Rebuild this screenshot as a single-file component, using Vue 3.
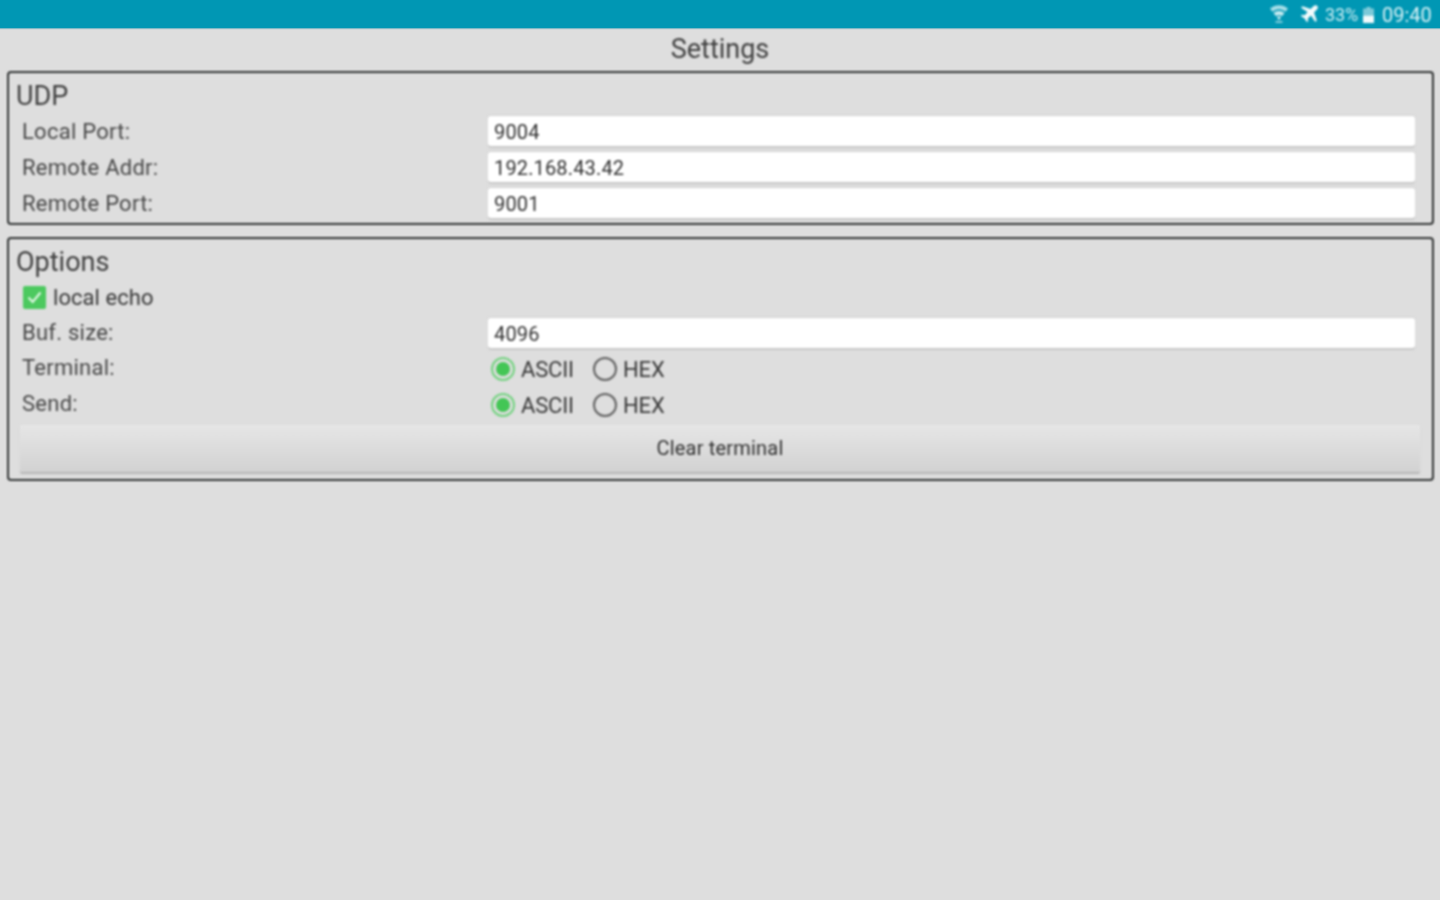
<script setup>
const udp = [
  { label: 'Local Port:', value: '9004' },
  { label: 'Remote Addr:', value: '192.168.43.42' },
  { label: 'Remote Port:', value: '9001' },
]
const modes = ['Terminal:', 'Send:']
</script>

<template>
  <div class="screen">
    <header class="status">
      <svg class="wifi" width="20" height="20" viewBox="0 0 20 20"><path d="M1 4.500C6 0 14 0 19 4.500L16.600 7.800C12.600 4.400 7.400 4.400 3.400 7.800Z" fill="#a8dfe8"/><path d="M4.500 9C8 6.400 12 6.400 15.500 9L13 12.200C11 10.800 9 10.800 7 12.200Z" fill="#c4e9ef"/><path d="M8 13.200C9.300 12.400 10.700 12.400 12 13.200L10 16Z" fill="#e6f7fa"/><rect x="6.500" y="17" width="7" height="1.800" fill="#8fd3df"/></svg>
      <svg class="plane" width="20" height="20" viewBox="0 0 20 20"><path d="M18.200 1.800C17.200.8 15.600 1 14.600 2L11.600 5 3.500 2.200 2 3.700 8.600 8 5.600 11.200 3 10.800 1.800 12 5.600 14.400 8 18.200 9.200 17 8.800 14.400 12 11.400 16.300 18 17.800 16.500 15 8.400 18 5.400C19 4.400 19.200 2.800 18.200 1.800Z" fill="#f4fbfc"/></svg>
      <span class="pct">33%</span>
      <svg class="batt" width="11" height="16" viewBox="0 0 11 16"><rect x="3.500" y="0" width="4" height="2" fill="#8fd3df"/><rect x="0" y="1.500" width="11" height="7" fill="#7cc9d8"/><rect x="0" y="8.500" width="11" height="7.500" fill="#f2fafb"/></svg>
      <span class="time">09:40</span>
    </header>

    <h1 class="title">Settings</h1>

    <section class="panel">
      <h2 class="heading heading-udp">UDP</h2>
      <div v-for="row in udp" :key="row.label" class="row">
        <span class="label">{{ row.label }}</span>
        <div class="field">{{ row.value }}</div>
      </div>
    </section>

    <section class="panel options">
      <h2 class="heading">Options</h2>
      <div class="check-row">
        <span class="check">
          <svg width="23" height="23" viewBox="0 0 23 23"><rect width="23" height="23" rx="2" fill="#4cc95f"/><path d="M5.500 11.500L9.700 16 17.500 6.500" fill="none" stroke="#e4f7e7" stroke-width="2"/></svg>
        </span>
        <span class="check-text">local echo</span>
      </div>
      <div class="row buf-row">
        <span class="label">Buf. size:</span>
        <div class="field">4096</div>
      </div>
      <div v-for="mode in modes" :key="mode" class="row">
        <span class="label label-up">{{ mode }}</span>
        <div class="radios">
          <span class="radio on"><i></i></span>
          <span class="radio-text ascii">ASCII</span>
          <span class="radio"></span>
          <span class="radio-text">HEX</span>
        </div>
      </div>
      <button class="btn" type="button">Clear terminal</button>
    </section>
  </div>
</template>

<style>
html, body { margin: 0; background: #dedede; }
</style>

<style scoped>
.screen {
  width: 1440px;
  height: 900px;
  overflow: hidden;
  background: #dedede;
  font-family: Roboto, "Liberation Sans", sans-serif;
  color: #4c4c4c;
}
.status {
  height: 28px;
  background: #0097b4;
  display: flex;
  align-items: center;
  justify-content: flex-end;
  padding-right: 8px;
  box-sizing: border-box;
  color: #cdeef3;
  box-shadow: 0 1px 1px #7fb9c6;
}
.status > *, .title, .panel { filter: blur(0.8px); }
.wifi { margin-right: 10px; }
.plane { margin-right: 6px; }
.pct { font-size: 18px; width: 33px; margin-right: 5px; white-space: nowrap; letter-spacing: -0.1px; }
.batt { margin-right: 8px; margin-top: 2px; }
.time { font-size: 20px; width: 50px; white-space: nowrap; color: #d8f2f6; padding-top: 2px; }
.title {
  height: 43px;
  margin: 0;
  font-size: 27px;
  font-weight: 400;
  line-height: 43px;
  text-align: center;
  color: #404040;
}
.panel {
  width: 1427px;
  box-sizing: border-box;
  margin: 0 0 12px 7px;
  border: 2px solid #2c2f2f;
  border-radius: 4px;
  padding: 0 0 2px 7px;
  box-shadow: 0 0 0 1px #ececec;
}
.heading {
  margin: 0;
  padding-top: 6px;
  height: 34px;
  font-size: 27px;
  font-weight: 400;
  line-height: 34px;
  color: #404040;
}
.options .heading { height: 33px; }
.row {
  display: grid;
  grid-template-columns: 466px 927px;
  align-items: center;
  height: 36px;
  margin-left: 6px;
}
.buf-row .label { margin-bottom: 2px; }
.label { font-size: 22px; color: #484848; white-space: nowrap; letter-spacing: 0.25px; }
.label-up { margin-bottom: 4px; }
.field {
  height: 30px;
  box-sizing: border-box;
  background: #fff;
  border-radius: 3px;
  box-shadow: 0 2px 1px #c8c8c8, 0 -1px 0 #d2d2d2;
  padding-left: 6px;
  font-size: 20px;
  line-height: 32px;
  letter-spacing: 0.15px;
  color: #303030;
}
.check-row {
  display: flex;
  align-items: center;
  height: 36px;
  padding-top: 1px;
  margin-left: 7px;
}
.check { display: flex; margin-right: 7px; }
.check-text { font-size: 22px; color: #383838; letter-spacing: 0.05px; }
.radios { display: flex; align-items: center; margin-left: 3px; }
.radio {
  width: 24px;
  height: 24px;
  box-sizing: border-box;
  border: 2px solid #606060;
  border-radius: 50%;
  display: flex;
  align-items: center;
  justify-content: center;
  margin-right: 6px;
}
.radio.on { border-color: #72d27f; }
.radio i { width: 14px; height: 14px; border-radius: 50%; background: #43c655; }
.radio-text { font-size: 22px; color: #383838; letter-spacing: -0.15px; }
.ascii { width: 56px; margin-right: 16px; }
.btn {
  display: block;
  width: 1400px;
  height: 47px;
  margin: 2px 0 5px 4px;
  padding: 0 0 2px;
  border: 0;
  border-radius: 2px;
  background: linear-gradient(#e6e6e6, #d2d2d2);
  box-shadow: 0 2px 1px #b5b5b5;
  font-family: inherit;
  font-size: 20px;
  letter-spacing: 0.2px;
  color: #303030;
}
</style>
